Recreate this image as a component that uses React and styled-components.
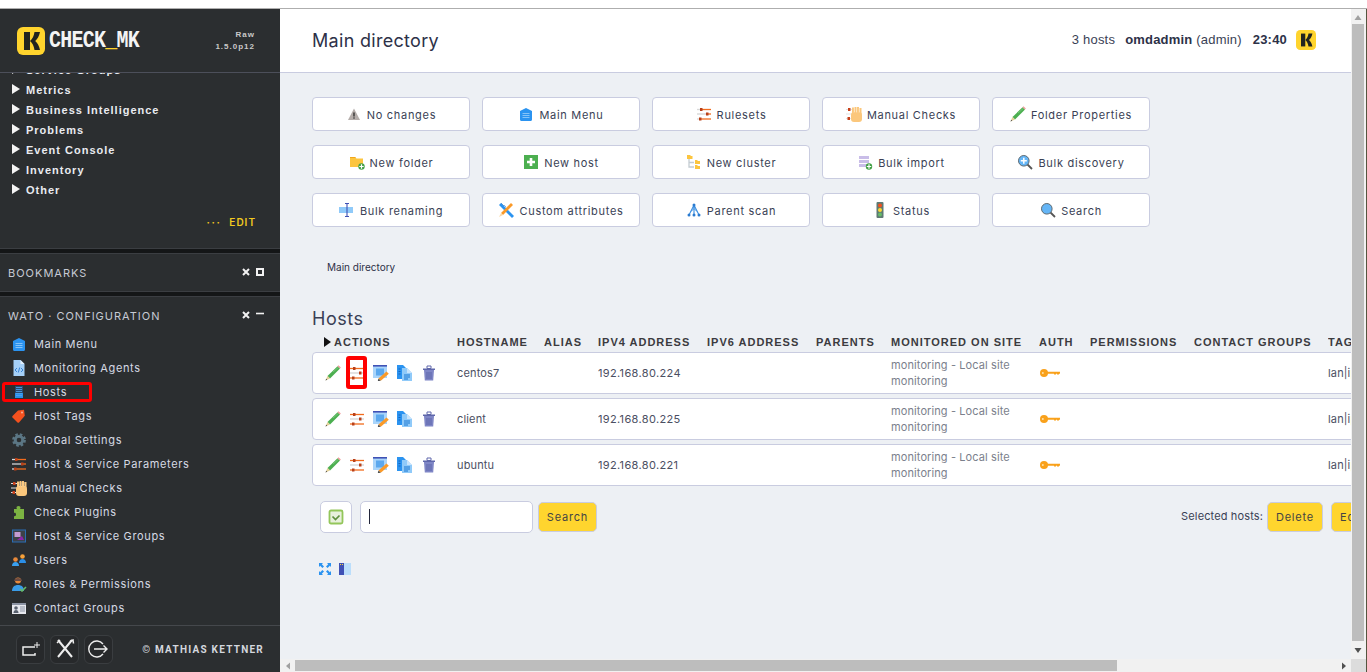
import React from "react";
import styled, { createGlobalStyle } from "styled-components";

const Global = createGlobalStyle`
  html, body { margin: 0; padding: 0; background: #fff; overflow: hidden; }
  *, *::before, *::after { box-sizing: border-box; }
  #root { height: 672px; }
`;

const Page = styled.div`
  height: 672px; display: flex; flex-direction: column; background: #fff;
  padding-top: 8px; font-family: Inter, sans-serif;
`;
const TopLine = styled.div`height: 1px; background: #aeaeae; flex: none;`;
const Shell = styled.div`flex: 1; display: flex; min-height: 0;`;

/* ---------- sidebar ---------- */
const Side = styled.aside`
  width: 280px; flex: none; background: #2b2e30; display: flex; flex-direction: column;
  color: #dfe2ea;
`;
const SideHead = styled.div`
  height: 64px; flex: none; display: flex; align-items: center; padding: 0 25px 0 17px;
  border-bottom: 1px solid #4c4f5a;
`;
const Wordmark = styled.span`
  display: inline-block; margin-left: 4px; font: bold 20px "Liberation Mono", monospace; letter-spacing: -0.75px;
  color: #f4f4f4; transform: scaleY(1.15);
  span { color: #ffd42d; }
`;
const Version = styled.div`
  margin-left: auto; text-align: right; font: bold 8px/12px "Liberation Sans", sans-serif;
  letter-spacing: 1px; color: #c9c9c9;
`;
const Tree = styled.div`
  height: 127px; flex: none; overflow: hidden; display: flex; flex-direction: column; justify-content: flex-end;
`;
const TreeRow = styled.div`
  height: 20px; flex: none; display: flex; align-items: center; gap: 6px; padding-left: 12px;
  font: bold 11px "Liberation Sans", sans-serif; letter-spacing: 1px; color: #e9ebf0;
  svg { margin-top: -3px; }
`;
const EditRow = styled.div`
  height: 48px; flex: none; display: flex; align-items: center; justify-content: flex-end; gap: 8px;
  padding: 0 24px 4px 0; font: 600 10px Inter, sans-serif; letter-spacing: 1px; color: #f1c91f;
`;
const Dots = styled.span`letter-spacing: 1.6px; font-weight: 700;`;
const Divider = styled.div`
  height: 6px; flex: none; background: #141617; border-top: 1px solid #3b3e42; border-bottom: 1px solid #3b3e42;
`;
const SnapHead = styled.div`
  height: ${p => p.$h}px; flex: none; display: flex; align-items: center; justify-content: space-between;
  padding: ${p => p.$pad} 16px 0 8px; font: 400 11px Inter, sans-serif; letter-spacing: 1px; color: #c6cad4;
`;
const SnapTools = styled.div`display: flex; gap: 6px; align-items: center; margin-top: -2px;`;
const Menu = styled.nav`height: 293px; flex: none;`;
const MenuItem = styled.div`
  position: relative; height: 24px; display: flex; align-items: center; gap: 7px; padding-left: 11px;
  font: 400 11px Inter, sans-serif; letter-spacing: 0.65px; color: #d6dae4;
  ${p => p.$marked && `
    &::after {
      content: ""; position: absolute; left: 2px; top: 2px; width: 90px; height: 20px;
      border: 3px solid #f00; border-radius: 3px;
    }
  `}
`;
const Foot = styled.footer`
  flex: 1; display: flex; align-items: center; gap: 5px; padding: 0 16px; border-top: 1px solid #45484c;
`;
const FootBtn = styled.div`
  width: 29px; height: 29px; border: 1px solid #3a3d40; border-radius: 6px; background: #27292b;
  display: flex; align-items: center; justify-content: center;
`;
const Copy = styled.div`
  margin-left: auto; font: 700 10px Roboto, sans-serif; letter-spacing: 1.25px; color: #d4d7de;
  white-space: nowrap;
`;

/* ---------- main ---------- */
const MainCol = styled.div`flex: 1; min-width: 0; display: flex; flex-direction: column;`;
const MainTop = styled.div`flex: 1; min-height: 0; display: flex;`;
const Content = styled.main`flex: 1; min-width: 0; overflow: hidden; background: #edf0f4; color: #3a3f55;`;
const Head = styled.header`
  height: 64px; background: #fff; border-bottom: 1px solid #c9cce0; display: flex; align-items: center;
  padding: 0 35px 2px 32px;
`;
const Title = styled.h1`margin: 2px 0 0; font: 400 18px Inter, sans-serif; letter-spacing: 0.3px; color: #2d3148;`;
const Status = styled.div`
  margin-left: auto; display: flex; align-items: center; font: 13px "Liberation Sans", sans-serif; color: #3a3f55;
  letter-spacing: 0.2px;
`;
const StatusItem = styled.span`margin-right: ${p => p.$m}px; white-space: nowrap; b { color: #2d3148; }`;
const Body = styled.div`padding: 24px 0 0 32px;`;
const ButtonGrid = styled.div`
  display: grid; grid-template-columns: repeat(5, 158px); column-gap: 12px; row-gap: 14px;
`;
const Btn = styled.div`
  height: 34px; background: #fff; border: 1px solid #c9cce0; border-radius: 4px; display: flex;
  align-items: center; justify-content: center; gap: 5px; font: 400 11px Inter, sans-serif;
  letter-spacing: 0.7px; color: #3a3f55; white-space: nowrap; padding-top: 1px;
  svg { margin-top: -1px; }
`;
const Crumb = styled.div`
  margin-top: 32px; padding-left: 15px; font: 400 10px/16px Inter, sans-serif; color: #2d3148;
`;
const Section = styled.h2`
  margin: 33px 0 1px; font: 400 18px/22px Inter, sans-serif; letter-spacing: 0.5px; color: #3a3f55;
`;
const Wide = styled.div`width: 1075px;`;
const cols = "145px 87px 54px 109px 109px 75px 148px 51px 104px 134px 59px";
const HeadRow = styled.div`
  display: grid; grid-template-columns: ${cols}; height: 21px; align-items: center;
  font: bold 11px "Liberation Sans", sans-serif; letter-spacing: 1px; color: #3b3b3f; white-space: nowrap;
`;
const ActionsHead = styled.div`display: flex; align-items: center; gap: 3px; padding-left: 12px;`;
const HeadCell = styled.div`overflow: hidden;`;
const Rows = styled.div`display: flex; flex-direction: column; gap: 4px;`;
const Row = styled.div`
  display: grid; grid-template-columns: ${cols}; height: 42px; align-items: center; background: #fff;
  border: 1px solid #c9cce0; border-radius: 4px; margin: 0;
  font: 400 11px Inter, sans-serif; letter-spacing: 0.15px; color: #4b4f62;
`;
const Actions = styled.div`display: flex; gap: 8px; padding-left: 12px;`;
const ActionSlot = styled.div`
  position: relative; width: 16px; height: 16px;
  ${p => p.$marked && `
    &::after {
      content: ""; position: absolute; left: -3px; top: -9px; width: 21px; height: 33px;
      border: 4px solid #f00; border-radius: 3px;
    }
  `}
`;
const Cell = styled.div`white-space: nowrap; overflow: hidden;`;
const FirstCell = styled(Cell)`margin-left: -1px;`;
const IpCell = styled(FirstCell)`letter-spacing: 0.35px;`;
const SiteCell = styled.div`font-size: 11px; line-height: 16px; color: #7b7f8c; margin-left: -1px; letter-spacing: 0.1px;`;
const AuthCell = styled.div``;
const Controls = styled.div`
  margin-top: 15px; display: flex; align-items: center; justify-content: space-between; padding-left: 8px;
`;
const LeftCtl = styled.div`display: flex; align-items: center;`;
const CheckBtn = styled.div`
  width: 32px; height: 32px; background: #fff; border: 1px solid #c9cce0; border-radius: 5px;
  display: flex; align-items: center; justify-content: center; margin-right: 8px;
`;
const Input = styled.div`
  width: 173px; height: 32px; background: #fff; border: 1px solid #c9cce0; border-radius: 5px;
  margin: -1px 5px 0 0; display: flex; align-items: center; padding-left: 8px;
`;
const Caret = styled.span`width: 1px; height: 15px; background: #22263a;`;
const YellowBtn = styled.div`
  width: ${p => p.$w}px; height: 30px; background: #ffd52e; border: 1px solid #c9cce0; border-radius: 5px;
  display: flex; align-items: center; justify-content: ${p => p.$clip ? "flex-start" : "center"};
  padding-left: ${p => p.$clip ? 8 : 0}px;
  font: 400 11px Inter, sans-serif; letter-spacing: 0.8px; color: #444;
`;
const RightCtl = styled.div`display: flex; align-items: center; gap: 8px;`;
const Selected = styled.span`
  font: 400 11px Inter, sans-serif; letter-spacing: 0.13px; color: #3a3f55; margin-right: -4px; margin-top: -2px;
`;
const Tiny = styled.div`margin: 30px 0 0 7px; display: flex; gap: 8px;`;

/* ---------- fake scrollbars ---------- */
const VBar = styled.div`
  width: 16px; flex: none; background: #f1f1f1; display: flex; flex-direction: column; align-items: center;
  border-right: 1px solid #55553f; padding-right: 1px;
`;
const BarArrowCell = styled.div`
  flex: none; height: ${p => p.$h}px; display: flex; align-items: center; justify-content: center;
`;
const VThumb = styled.div`flex: 1; width: 12px; background: #bdbdbd;`;
const HBar = styled.div`height: 13px; flex: none; background: #f1f1f1; display: flex;`;
const HArrow = styled.div`width: 15px; flex: none; display: flex; align-items: center; justify-content: center;`;
const HThumb = styled.div`width: 822px; margin: 1px 0; background: #bdbdbd;`;
const HFill = styled.div`flex: 1;`;
const Corner = styled.div`width: 16px; flex: none; background: #dcdcdc; border-right: 1px solid #55553f;`;

const Svg = styled.svg`display: block; flex: none;`;
const Ic = ({ s = 16, w, h, vb = "0 0 16 16", children }) => (
  <Svg width={w || s} height={h || s} viewBox={vb}>{children}</Svg>
);

/* ---------- icons ---------- */
const Logo = ({ s }) => (
  <Ic s={s} vb="0 0 28 28">
    <rect width="28" height="28" rx="6" fill="#ffd42d" />
    <path d="M7 5h6v18H7z" fill="#22241f" />
    <path d="M23 5h-5.500c-.6 3.800-2 7-4.500 9 2.500 2 3.900 5.200 4.500 9H23c-.8-3.800-2.400-7-4.800-9 2.400-2 4-5.200 4.800-9z" fill="#22241f" />
  </Ic>
);
const Home = () => (
  <Ic>
    <path d="M8 2l6 3v8.500c0 .8-.6 1.500-1.400 1.500H3.400C2.600 15 2 14.300 2 13.500V5z" fill="#2b93f0" />
    <path d="M4.500 7.500h7M4.500 9.500h7M4.500 11.500h7" stroke="#85c3f8" strokeWidth="1" />
  </Ic>
);
const Agents = () => (
  <Ic>
    <path d="M2.500 0h7l4 4v12h-11z" fill="#a5d0f8" />
    <path d="M9.500 0l4 4h-4z" fill="#e3f0fd" />
    <path d="M6 8l-2 2 2 2M10 8l2 2-2 2M8.700 7.500l-1.400 5" stroke="#2b7bd0" strokeWidth=".9" fill="none" />
  </Ic>
);
const HostsIc = () => (
  <Ic>
    <rect x="4" y="2" width="8" height="12" fill="#2b8fe8" />
    <rect x="4" y="2" width="8" height="7" fill="#27496f" />
    <path d="M5 3.500h6M5 5.500h6M5 7.500h6M5 9.500h6M5 11.500h6" stroke="#4fa7f1" strokeWidth=".8" />
  </Ic>
);
const TagIc = () => (
  <Ic>
    <path d="M1.500 8l5.500-5.500 6-.8.800 6L8 14.500c-.5.4-1 .4-1.500 0l-5-5c-.4-.5-.4-1 0-1.500z" fill="#f4511e" />
    <circle cx="11" cy="4.500" r="1" fill="#f9b39b" />
  </Ic>
);
const Gear = () => (
  <Ic>
    <circle cx="8" cy="8" r="3.800" fill="none" stroke="#5b7684" strokeWidth="3" />
    <circle cx="8" cy="8" r="5.700" fill="none" stroke="#5b7684" strokeWidth="2.400" strokeDasharray="2.500 2" />
  </Ic>
);
const Sliders = ({ light }) => (
  <Ic>
    <path d="M1 3.500h3" stroke={light ? "#d8d8d8" : "#f26b1d"} strokeWidth="1.300" />
    <path d="M4 3.500h11" stroke="#f26b1d" strokeWidth="1.300" />
    <path d="M1 8h9" stroke="#d4d4d4" strokeWidth="1.300" />
    <path d="M10 8h5" stroke={light ? "#f26b1d" : "#d4d4d4"} strokeWidth="1.300" />
    <path d="M1 13h3" stroke={light ? "#d8d8d8" : "#f26b1d"} strokeWidth="1.300" />
    <path d="M4 13h11" stroke="#f26b1d" strokeWidth="1.300" />
    <rect x="4" y="2" width="2.500" height="3" fill="#b8401a" />
    <rect x="10" y="6.500" width="2.500" height="3" fill="#b8401a" />
    <rect x="3" y="11.500" width="2.500" height="3" fill="#b8401a" />
  </Ic>
);
const Hand = () => (
  <Ic>
    <path d="M0 3.500h6M0 8h6M0 12.500h6" stroke="#e2e2e2" strokeWidth="1.200" />
    <rect x="2" y="2" width="2.500" height="3" fill="#c8401a" />
    <rect x="1.500" y="11" width="2.500" height="3" fill="#c8401a" />
    <rect x="5" y="6" width="11" height="10" rx="3" fill="#fbc77c" />
    <path d="M6 1.500h2v6H6zM8.500 1h2v6h-2zM11 1h2v6h-2zM13.500 2h2v6h-2z" fill="#fbc77c" />
    <path d="M8.200 2v5M10.700 2v5M13.200 2v5" stroke="#fde2b8" strokeWidth=".5" />
  </Ic>
);
const Puzzle = () => (
  <Ic>
    <path d="M3 5h3c-.8-1-.8-3 1.500-3S9.800 4 9 5h4v10H3v-3c1 .6 2 0 2-1.500S4 8.400 3 9z" fill="#7cb342" />
  </Ic>
);
const Groups = () => (
  <Ic>
    <rect x="1.500" y="2" width="13" height="12" fill="#3d4148" stroke="#2a6db3" />
    <rect x="3.500" y="4" width="6" height="5" fill="#c39bd3" />
    <path d="M6 12l5-4 2 4z" fill="#8e24aa" />
  </Ic>
);
const Person = ({ x, y, skin, body }) => (
  <g transform={`translate(${x} ${y})`}>
    <circle cx="3.500" cy="2.500" r="2.300" fill={skin} />
    <path d="M0 9c0-2.500 1.500-4 3.500-4S7 6.500 7 9z" fill={body} />
  </g>
);
const Users = () => (
  <Ic>
    <Person x={8} y={2} skin="#f6a13a" body="#2b8fe8" />
    <Person x={1} y={5} skin="#e8893a" body="#3aa0f0" />
  </Ic>
);
const Roles = () => (
  <Ic>
    <circle cx="7" cy="4.500" r="3" fill="#e8893a" />
    <path d="M3 5h8c0-4-8-4-8 0z" fill="#6d4c41" />
    <path d="M1 15c0-4 2.500-6 6-6s6 2 6 6z" fill="#3a9ce8" />
    <path d="M9 13l2 2 4-4" stroke="#66bb6a" strokeWidth="1.600" fill="none" />
  </Ic>
);
const Contact = () => (
  <Ic>
    <rect x="1" y="3" width="14" height="11" fill="#e6e8ee" />
    <rect x="1" y="3" width="14" height="2" fill="#8b93a3" />
    <circle cx="5" cy="8" r="1.800" fill="#59616f" />
    <path d="M2.500 13c0-2 1-3 2.500-3s2.500 1 2.500 3z" fill="#59616f" />
    <path d="M9 7h5M9 9h5M9 11h5" stroke="#8b93a3" />
  </Ic>
);
const Warn = () => (
  <Ic>
    <path d="M8 2.500l6 11.500H2z" fill="#b5aeab" />
    <path d="M8 6.500v4" stroke="#333" strokeWidth="1.400" />
    <circle cx="8" cy="12" r=".8" fill="#333" />
  </Ic>
);
const Plus2 = ({ cx, cy, r }) => (
  <>
    <circle cx={cx} cy={cy} r={r} fill="#43a047" />
    <path d={`M${cx - r + 1} ${cy}h${2 * r - 2}M${cx} ${cy - r + 1}v${2 * r - 2}`} stroke="#fff" strokeWidth="1.200" />
  </>
);
const FolderNew = () => (
  <Ic>
    <path d="M1 3h5l1.500 1.500H14V13H1z" fill="#fcc53f" />
    <path d="M1 3h5l1 1H1z" fill="#f2a71b" />
    <Plus2 cx={12.500} cy={12.500} r={3.200} />
  </Ic>
);
const HostNew = () => (
  <Ic>
    <rect x="1" y="1" width="14" height="14" fill="#4caf50" />
    <path d="M8 4v8M4 8h8" stroke="#fff" strokeWidth="2.600" />
  </Ic>
);
const Cluster = () => (
  <Ic>
    <path d="M3 5v8h5M3 8.500h5" stroke="#c4ccd2" strokeWidth="1.300" fill="none" />
    <path d="M1 1h3l1 1h1.500v3H1z" fill="#fcc53f" />
    <path d="M9 6h2l1 1h2v3H9zM9 11h2l1 1h2v3H9z" fill="#fcc53f" />
  </Ic>
);
const Import = () => (
  <Ic>
    <rect x="2" y="2" width="10" height="3" fill="#c9bde8" />
    <rect x="2" y="6" width="10" height="3" fill="#c9bde8" />
    <rect x="2" y="10" width="10" height="3" fill="#c9bde8" />
    <Plus2 cx={12} cy={12.500} r={3.200} />
  </Ic>
);
const Lens = ({ plus }) => (
  <Ic>
    <path d="M10 10l5 5" stroke="#555" strokeWidth="1.800" />
    <circle cx="6.800" cy="6.800" r="5.300" fill="#64b5f6" stroke="#5d6a72" strokeWidth="1" />
    {plus && <path d="M6.800 3.800v6M3.800 6.800h6" stroke="#fff" strokeWidth="1.500" />}
  </Ic>
);
const Traffic = () => (
  <Ic>
    <rect x="4.500" y="0" width="7" height="16" rx="1" fill="#5f7a73" />
    <circle cx="8" cy="3.500" r="2" fill="#f4511e" />
    <circle cx="8" cy="8" r="2" fill="#fdd835" />
    <circle cx="8" cy="12.500" r="2" fill="#66bb6a" />
  </Ic>
);
const Pencil = () => (
  <Ic>
    <path d="M2.500 11L12.500 1.300l2.500 2.300L5 13.500z" fill="#4caf50" />
    <path d="M8 7l5.500-4.700" stroke="#7cc97f" strokeWidth=".8" />
    <path d="M12.500 1.300L13.500.3l2.300 2.200-.8 1.100z" fill="#ef9a9a" />
    <path d="M2.500 11L5 13.500 .5 15.500z" fill="#e2cf97" />
    <path d="M.5 15.500l.7-1.700 1 1z" fill="#444" />
  </Ic>
);
const Rename = () => (
  <Ic>
    <rect x="0" y="5" width="14" height="6" fill="#90caf9" />
    <path d="M6 1.500h4M8 1.500v13M6 14.500h4" stroke="#3f51b5" strokeWidth="1.100" fill="none" />
  </Ic>
);
const Attr = () => (
  <Ic>
    <path d="M1 3l2-2 13 13-2 2z" fill="#2b93f0" />
    <path d="M13 1l2 2-10 10-2-2z" fill="#fb9a28" />
    <path d="M3 11l2 2-4 2z" fill="#fbd9a8" />
    <path d="M3 1l3 3 1-1M7 5l1-1" stroke="#1565c0" strokeWidth=".5" fill="none" />
  </Ic>
);
const Parent = () => (
  <Ic>
    <path d="M8 3L3 13M8 3l5 10M8 3v10" stroke="#3a8ee0" strokeWidth="1.100" fill="none" />
    <path d="M8 6.500l-3 3M8 6.500l3 3" stroke="#3a8ee0" strokeWidth="1" fill="none" />
    <circle cx="8" cy="3" r="1.500" fill="#2b7bd0" />
    <circle cx="3" cy="13" r="1.500" fill="#2b7bd0" />
    <circle cx="8" cy="13" r="1.500" fill="#2b7bd0" />
    <circle cx="13" cy="13" r="1.500" fill="#2b7bd0" />
  </Ic>
);
const EditWin = () => (
  <Ic>
    <rect x="0" y="1" width="14" height="12" fill="#a9d4fa" />
    <rect x="0" y="0" width="14" height="1.600" fill="#3f51b5" />
    <rect x="3" y="3.500" width="8" height="7" fill="#5ba8ee" />
    <path d="M5.500 13.500L13.500 6.500 15.800 8.800 7.800 15.800z" fill="#fb9a28" />
    <path d="M5.500 13.500l2.300 2.300-3 .2z" fill="#444" />
  </Ic>
);
const CopyIc = () => (
  <Ic>
    <path d="M0 0h6l3 3v11H0z" fill="#2b93f0" />
    <path d="M5 3h5l5 5v8H5z" fill="#90caf9" />
    <path d="M10 3l5 5h-5z" fill="#c9e4fc" />
    <path d="M1.500 4h2M1.500 6.500h2M1.500 9h2" stroke="#1565c0" />
    <path d="M7 10h6M7 12h6M7 14h4" stroke="#1976d2" />
  </Ic>
);
const Trash = () => (
  <Ic>
    <path d="M3 5h10l-.8 10.500H3.800z" fill="#7f86c6" />
    <path d="M2 3.500h12v1.500H2z" fill="#5f67ab" />
    <path d="M6 1h4v2.500H6z" fill="none" stroke="#5f67ab" />
    <path d="M6 7v7M8 7v7M10 7v7" stroke="#5f67ab" />
  </Ic>
);
const KeyIc = () => (
  <Ic w={20} h={10} vb="0 0 20 10">
    <circle cx="4" cy="5" r="4" fill="#f9a11b" />
    <circle cx="2.800" cy="5" r="1" fill="#ffe0a8" />
    <path d="M7 3.800h13v2h-1v.8h-2v-.8h-1v.8h-2v-.8H7z" fill="#f9a11b" />
  </Ic>
);
const CheckIc = () => (
  <Ic>
    <rect x="1.500" y="1.500" width="13" height="13" rx="1.500" fill="#e8f0dc" stroke="#93c65a" strokeWidth="1.800" />
    <path d="M4.500 7.500l3 3 4-4" stroke="#5f8f3e" strokeWidth="1.700" fill="none" />
  </Ic>
);
const Expand = () => (
  <Ic w={12} h={12} vb="0 0 12 12">
    <path d="M0 0h4L2.800 1.200 5 3.400 3.400 5 1.200 2.800 0 4zM12 0v4l-1.200-1.200L8.600 5 7 3.400l2.200-2.200L8 0zM0 12V8l1.200 1.200L3.400 7 5 8.600 2.800 10.800 4 12zM12 12H8l1.200-1.200L7 8.600 8.600 7l2.200 2.200L12 8z" fill="#2b93f0" />
  </Ic>
);
const Split = () => (
  <Ic w={12} h={12} vb="0 0 12 12">
    <rect width="12" height="12" fill="#bbdefb" />
    <rect width="5" height="12" fill="#3f51b5" />
    <path d="M1 1.500h1M3 1.500h1" stroke="#fdd835" />
  </Ic>
);
const Close = () => (
  <Ic w={8} h={8} vb="0 0 8 8"><path d="M1 1l6 6M7 1L1 7" stroke="#f2f2f2" strokeWidth="2" /></Ic>
);
const Max = () => (
  <Ic w={8} h={8} vb="0 0 8 8"><rect x="1" y="1" width="6" height="6" fill="none" stroke="#f2f2f2" strokeWidth="2" /></Ic>
);
const Min = () => (
  <Ic w={8} h={8} vb="0 0 8 8"><path d="M0 2.500h8" stroke="#f2f2f2" strokeWidth="1.600" /></Ic>
);
const AddSnap = () => (
  <Ic w={20} h={20} vb="0 0 20 20">
    <path d="M14 8H2v8h12v-2" stroke="#eee" strokeWidth="1.500" fill="none" />
    <path d="M16 3v6M13 6h6" stroke="#eee" strokeWidth="1" />
  </Ic>
);
const ToolsIc = () => (
  <Ic w={20} h={20} vb="0 0 20 20">
    <path d="M3 1l14 17M17 1L3 18" stroke="#eee" strokeWidth="2" />
    <path d="M2 4l3-3" stroke="#eee" strokeWidth="1.500" />
    <path d="M15 2.500L18 1l.5 3.500" stroke="#eee" strokeWidth="1.500" fill="none" />
  </Ic>
);
const LogoutIc = () => (
  <Ic w={22} h={20} vb="0 0 22 20">
    <path d="M15 5A8 8 0 1 0 15 15" stroke="#eee" strokeWidth="1.400" fill="none" />
    <path d="M6 10h13M15.500 6.500L19 10l-3.500 3.500" stroke="#eee" strokeWidth="1.400" fill="none" />
  </Ic>
);
const TreeArrow = () => (
  <Ic w={8} h={10} vb="0 0 8 10"><path d="M0 0l8 5-8 5z" fill="#f4f4f4" /></Ic>
);
const HeadArrow = () => (
  <Ic w={7} h={10} vb="0 0 7 10"><path d="M0 0l7 5-7 5z" fill="#111" /></Ic>
);
const BarArrow = ({ d, fill = "#a0a0a0", w = 8, h = 8 }) => (
  <Ic w={w} h={h} vb="0 0 8 8"><path d={d} fill={fill} /></Ic>
);

/* ---------- data ---------- */
const tree = ["Service Groups", "Metrics", "Business Intelligence", "Problems", "Event Console", "Inventory", "Other"];
const menu = [
  ["Main Menu", Home], ["Monitoring Agents", Agents], ["Hosts", HostsIc, true], ["Host Tags", TagIc],
  ["Global Settings", Gear], ["Host & Service Parameters", () => <Sliders light />], ["Manual Checks", Hand],
  ["Check Plugins", Puzzle], ["Host & Service Groups", Groups], ["Users", Users],
  ["Roles & Permissions", Roles], ["Contact Groups", Contact],
];
const buttons = [
  ["No changes", Warn], ["Main Menu", Home], ["Rulesets", () => <Sliders light />], ["Manual Checks", Hand], ["Folder Properties", Pencil],
  ["New folder", FolderNew], ["New host", HostNew], ["New cluster", Cluster], ["Bulk import", Import], ["Bulk discovery", () => <Lens plus />],
  ["Bulk renaming", Rename], ["Custom attributes", Attr], ["Parent scan", Parent], ["Status", Traffic], ["Search", () => <Lens />],
];
const hosts = [["centos7", "192.168.80.224", true], ["client", "192.168.80.225"], ["ubuntu", "192.168.80.221"]];
const headers = ["HOSTNAME", "ALIAS", "IPV4 ADDRESS", "IPV6 ADDRESS", "PARENTS", "MONITORED ON SITE", "AUTH", "PERMISSIONS", "CONTACT GROUPS", "TAGS"];

export default function App() {
  return (
    <Page>
      <Global />
      <TopLine />
      <Shell>
        <Side>
          <SideHead>
            <Logo s={28} />
            <Wordmark>CHECK<span>_</span>MK</Wordmark>
            <Version>Raw<br />1.5.0p12</Version>
          </SideHead>
          <Tree>
            {tree.map(t => <TreeRow key={t}><TreeArrow />{t}</TreeRow>)}
          </Tree>
          <EditRow><Dots>···</Dots><span>EDIT</span></EditRow>
          <Divider />
          <SnapHead $h={37} $pad="1px">
            BOOKMARKS
            <SnapTools><Close /><Max /></SnapTools>
          </SnapHead>
          <Divider />
          <SnapHead $h={35} $pad="3px">
            WATO · CONFIGURATION
            <SnapTools><Close /><Min /></SnapTools>
          </SnapHead>
          <Menu>
            {menu.map(([label, I, marked]) => (
              <MenuItem key={label} $marked={marked}><I />{label}</MenuItem>
            ))}
          </Menu>
          <Foot>
            <FootBtn><AddSnap /></FootBtn>
            <FootBtn><ToolsIc /></FootBtn>
            <FootBtn><LogoutIc /></FootBtn>
            <Copy>© MATHIAS KETTNER</Copy>
          </Foot>
        </Side>
        <MainCol>
          <MainTop>
            <Content>
              <Head>
                <Title>Main directory</Title>
                <Status>
                  <StatusItem $m={10}>3 hosts</StatusItem>
                  <StatusItem $m={11}><b>omdadmin</b> (admin)</StatusItem>
                  <StatusItem $m={9}><b>23:40</b></StatusItem>
                  <Logo s={20} />
                </Status>
              </Head>
              <Body>
                <ButtonGrid>
                  {buttons.map(([label, I]) => <Btn key={label}><I />{label}</Btn>)}
                </ButtonGrid>
                <Crumb>Main directory</Crumb>
                <Section>Hosts</Section>
                <Wide>
                  <HeadRow>
                    <ActionsHead><HeadArrow />ACTIONS</ActionsHead>
                    {headers.map(h => <HeadCell key={h}>{h}</HeadCell>)}
                  </HeadRow>
                  <Rows>
                    {hosts.map(([name, ip, marked]) => (
                      <Row key={name}>
                        <Actions>
                          <Pencil />
                          <ActionSlot $marked={marked}><Sliders /></ActionSlot>
                          <EditWin />
                          <CopyIc />
                          <Trash />
                        </Actions>
                        <FirstCell>{name}</FirstCell>
                        <Cell />
                        <IpCell>{ip}</IpCell>
                        <Cell />
                        <Cell />
                        <SiteCell>monitoring - Local site<br />monitoring</SiteCell>
                        <AuthCell><KeyIc /></AuthCell>
                        <Cell />
                        <Cell />
                        <FirstCell>lan|ip-v4-only</FirstCell>
                      </Row>
                    ))}
                  </Rows>
                  <Controls>
                    <LeftCtl>
                      <CheckBtn><CheckIc /></CheckBtn>
                      <Input><Caret /></Input>
                      <YellowBtn $w={59}>Search</YellowBtn>
                    </LeftCtl>
                    <RightCtl>
                      <Selected>Selected hosts:</Selected>
                      <YellowBtn $w={56}>Delete</YellowBtn>
                      <YellowBtn $w={56} $clip>Edit</YellowBtn>
                    </RightCtl>
                  </Controls>
                  <Tiny><Expand /><Split /></Tiny>
                </Wide>
              </Body>
            </Content>
            <VBar>
              <BarArrowCell $h={15}><BarArrow d="M4 2l3.500 5h-7z" /></BarArrowCell>
              <VThumb />
              <BarArrowCell $h={18}><BarArrow d="M.5 2h7L4 7z" fill="#505050" /></BarArrowCell>
            </VBar>
          </MainTop>
          <HBar>
            <HArrow><BarArrow d="M6 .5v7L2 4z" /></HArrow>
            <HThumb />
            <HFill />
            <HArrow><BarArrow d="M2 .5v7L6 4z" fill="#505050" /></HArrow>
            <Corner />
          </HBar>
        </MainCol>
      </Shell>
    </Page>
  );
}
